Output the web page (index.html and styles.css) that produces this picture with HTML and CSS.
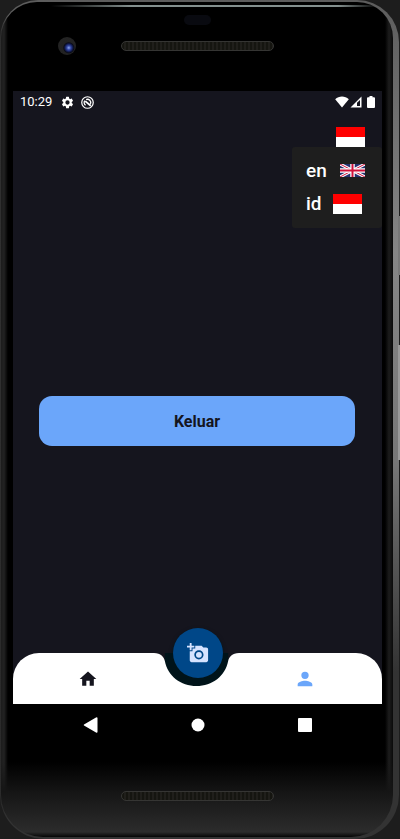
FILE: styles.css
```css
* { box-sizing: border-box; }
body {
  margin: 0;
  background: #1d1d1d;
  font-family: Roboto, "Liberation Sans", sans-serif;
  color: #fff;
}
button {
  border: 0;
  padding: 0;
  background: none;
  font: inherit;
  color: inherit;
}
svg { display: block; flex: none; }
.defs { position: absolute; }

.phone {
  position: relative;
  display: flex;
  min-height: 100vh;
  margin-right: 1px;
  padding: 2px 6px 2px 1px;
  border-radius: 38px 42px 44px 44px;
  background:
    linear-gradient(90deg, #2a2a2a, transparent 8px),
    linear-gradient(#5c5c5c, #858585 30%, #777 55%, #333 80%, #333);
}
.key {
  position: absolute;
  right: -1px;
  width: 2px;
  background: #777;
}
.power { top: 216px; height: 59px; }
.volume { top: 345px; height: 115px; background: #999; }
.glass {
  flex: 1;
  display: flex;
  flex-direction: column;
  padding: 0 11px 0 12px;
  border-radius: 36px 36px 42px 42px;
  background:
    linear-gradient(90deg, transparent 50px, #84908f 130px, #84908f 86%, transparent 96%) 0 3px / 100% 2px no-repeat,
    linear-gradient(transparent calc(100% - 75px), #151515 calc(100% - 45px), #2c2c2c calc(100% - 5px), #050505),
    linear-gradient(90deg, #1c1c1c, #222 3px, #000 7px, #000 calc(100% - 8px), #1c1c1c calc(100% - 4px), #0a0a0a);
}
.bezel-top {
  height: 89px;
  padding-top: 13px;
}
.sensor {
  display: block;
  width: 27px;
  height: 10px;
  margin: 0 auto;
  border-radius: 5px;
  background: #090a10;
}
.earpiece-row {
  display: grid;
  grid-template-columns: 1fr auto 1fr;
  align-items: center;
  padding-top: 12px;
}
.camera {
  justify-self: center;
  width: 18px;
  height: 18px;
  border-radius: 50%;
  background: radial-gradient(circle at 60% 60%, #91a9f0, #3449a8 2px, #111a4c 4px, #0b0c19 5px, #222 6px, #242424);
}
.speaker {
  width: 153px;
  height: 10px;
  border: 1px solid #353533;
  border-radius: 5px;
  background: repeating-linear-gradient(90deg, #151510, #151510 2px, #201f1b 2px, #201f1b 4px);
}

.screen {
  flex: none;
  min-height: 613px;
  display: flex;
  flex-direction: column;
  background: #15151e;
}
.status {
  display: flex;
  align-items: center;
  height: 22px;
  padding: 0 7px;
  font-size: 13px;
  line-height: 22px;
}
.status-icon {
  width: 13px;
  height: 13px;
  margin-left: 7px;
}
.time { margin-right: 2px; }
.signals {
  display: flex;
  gap: 1px;
  margin-left: auto;
}
.battery { margin-left: 4px; }
.appbar {
  position: relative;
  display: flex;
  justify-content: flex-end;
  padding: 14px 17px 0;
}
.menu {
  position: absolute;
  top: 34px;
  right: 0;
  width: 90px;
  padding: 7px 14px 8px;
  border-radius: 3px;
  background: #1e1e1e;
}
.menu button {
  display: flex;
  align-items: center;
  gap: 11px;
  height: 33px;
  font-size: 19px;
  font-weight: 500;
}
.uk { margin-left: 2px; }
.content {
  flex: 1;
  display: flex;
  align-items: center;
  padding: 42px 27px 0 26px;
}
.logout {
  flex: 1;
  height: 50px;
  border-radius: 13px;
  background: #6ba6fa;
  color: #15151e;
  font-size: 16px;
  font-weight: 700;
}
.tabs {
  position: relative;
  display: flex;
  height: 51px;
}
.tab {
  flex: 1;
  display: flex;
  align-items: center;
  justify-content: center;
  background: #fff;
}
.tab-home {
  padding-left: 12px;
  border-top-left-radius: 26px;
}
.tab-user {
  padding-right: 14px;
  border-top-right-radius: 26px;
}
.notch { margin: 0 -1px; }
.fab {
  position: absolute;
  top: -25px;
  left: calc(50% - 25px);
  display: grid;
  place-items: center;
  width: 50px;
  height: 50px;
  border-radius: 50%;
  background: #004788;
  box-shadow: 0 2px 4px #00141a;
}
.system {
  display: flex;
  justify-content: space-around;
  align-items: center;
  height: 42px;
  padding: 0 24px;
}
.bezel-bottom {
  flex: 1;
  display: flex;
  justify-content: center;
  padding-top: 45px;
}
```

FILE: index.html
```html
<!DOCTYPE html>
<html lang="id">
<head>
<meta charset="utf-8">
<meta name="viewport" content="width=device-width, initial-scale=1">
<title>Profil</title>
<link rel="stylesheet" href="styles.css">
</head>
<body>
<svg class="defs" width="0" height="0" aria-hidden="true">
  <symbol id="flag-id" viewBox="0 0 29 20" preserveAspectRatio="none">
    <path fill="#fff" d="M0 0h29v20H0z"/><path fill="#f00" d="M0 0h29v10H0z"/>
  </symbol>
  <symbol id="flag-en" viewBox="0 0 50 26" preserveAspectRatio="none">
    <path fill="#25306f" d="M0 0h50v26H0z"/>
    <path stroke="#fff" stroke-width="6" d="M0 0l50 26M50 0L0 26"/>
    <path stroke="#d0103a" stroke-width="2" d="M0 0l50 26M50 0L0 26"/>
    <path stroke="#fff" stroke-width="9" d="M25 0v26M0 13h50"/>
    <path stroke="#d0103a" stroke-width="4" d="M25 0v26M0 13h50"/>
  </symbol>
</svg>
<div class="phone">
  <span class="key power"></span>
  <span class="key volume"></span>
  <div class="glass">
    <div class="bezel-top">
      <span class="sensor"></span>
      <div class="earpiece-row">
        <span class="camera"></span>
        <span class="speaker"></span>
      </div>
    </div>
    <div class="screen">
      <div class="status">
        <span class="time">10:29</span>
        <svg class="status-icon" viewBox="1 1 22 22"><path fill="#fff" d="M19.14 12.94c.04-.3.06-.61.06-.94s-.02-.64-.07-.94l2.03-1.58a.49.49 0 0 0 .12-.61l-1.92-3.32a.49.49 0 0 0-.59-.22l-2.39.96a7 7 0 0 0-1.62-.94l-.36-2.54a.48.48 0 0 0-.48-.41h-3.84a.48.48 0 0 0-.47.41l-.36 2.54c-.59.24-1.13.57-1.62.94l-2.39-.96a.48.48 0 0 0-.59.22L2.74 8.87a.48.48 0 0 0 .12.61l2.03 1.58a6 6 0 0 0-.02 1.88l-2.03 1.58a.49.49 0 0 0-.12.61l1.92 3.32c.12.22.37.29.59.22l2.39-.96c.5.38 1.03.7 1.62.94l.36 2.54c.05.24.24.41.48.41h3.84c.24 0 .44-.17.47-.41l.36-2.54c.59-.24 1.13-.56 1.62-.94l2.39.96c.22.08.47 0 .59-.22l1.92-3.32a.48.48 0 0 0-.12-.61zM12 15.6a3.6 3.6 0 1 1 0-7.2 3.6 3.6 0 0 1 0 7.2z"/></svg>
        <svg class="status-icon" viewBox="0 0 14 14" fill="none" stroke="#fff"><circle cx="7" cy="7" r="6.2" stroke-width="1.3"/><path stroke-width="1.4" d="M5 10A3.6 3.6 0 0 1 4 5M5.5 3.8A3.6 3.6 0 0 1 10.2 8.5"/><path stroke-width="2" d="M4.5 5.5l6 5"/></svg>
        <span class="signals">
          <svg width="14" height="12" viewBox="0 0 14 12"><path fill="#fff" d="M7 11.5L.2 3.2C4-.3 10-.3 13.8 3.2z"/></svg>
          <svg width="12" height="12" viewBox="0 0 12 12"><path fill="#fff" d="M11.5.5v11H.5z"/><path fill="#15151e" d="M7 6.8L10 4v6H7z"/></svg>
          <svg class="battery" width="8" height="12" viewBox="0 0 8 12"><path fill="#fff" d="M2.5 0h3v1.2H7q1 0 1 1V11q0 1-1 1H1q-1 0-1-1V2.2q0-1 1-1h1.5z"/></svg>
        </span>
      </div>
      <header class="appbar">
        <button class="lang" type="button" aria-label="Bahasa"><svg width="29" height="20"><use href="#flag-id"/></svg></button>
        <div class="menu">
          <button type="button">en <svg class="uk" width="25" height="13"><use href="#flag-en"/></svg></button>
          <button type="button">id <svg width="29" height="20"><use href="#flag-id"/></svg></button>
        </div>
      </header>
      <main class="content"><button class="logout" type="button">Keluar</button></main>
      <nav class="tabs">
        <a class="tab tab-home" href="#home" aria-label="Beranda"><svg width="20" height="20" viewBox="0 0 24 24"><path fill="#15151e" d="M10 20v-6h4v6h5v-8h3L12 3 2 12h3v8z"/></svg></a>
        <svg class="notch" width="93" height="51" viewBox="0 0 94 51" preserveAspectRatio="none" aria-hidden="true">
          <path fill="#00141a" d="M13 0h68v34H13z"/>
          <path fill="#15151e" d="M0 0h15v10H0zM79 0h15v10H79z"/>
          <path fill="#fff" d="M0 0h4C11 0 14 4 15 8C18 23 31 33 47 33S76 23 79 8C80 4 83 0 90 0H94V51H0z"/>
        </svg>
        <a class="tab tab-user" href="#profile" aria-label="Profil"><svg width="22" height="22" viewBox="0 0 24 24"><path fill="#6ba6fa" d="M12 12a4 4 0 1 0 0-8 4 4 0 0 0 0 8zm0 2c-2.67 0-8 1.34-8 4v2h16v-2c0-2.66-5.33-4-8-4z"/></svg></a>
        <button class="fab" type="button" aria-label="Tambah foto"><svg width="22" height="22" viewBox="0 0 24 24"><path fill="#d6e3ff" d="M3 4V1h2v3h3v2H5v3H3V6H0V4zm3 6V7h3V4h7l1.83 2H21c1.1 0 2 .9 2 2v12c0 1.1-.9 2-2 2H5c-1.1 0-2-.9-2-2V10zm7 9c2.76 0 5-2.24 5-5s-2.24-5-5-5-5 2.24-5 5 2.24 5 5 5zm-3.2-5a3.2 3.2 0 1 0 6.4 0 3.2 3.2 0 0 0-6.4 0z"/></svg></button>
      </nav>
    </div>
    <div class="system">
      <button type="button" aria-label="Kembali"><svg width="16" height="16" viewBox="0 0 16 16"><path fill="#fff" d="M14.5.8v14.4Q14 16 13 15.4L1 8.6Q.4 8 1 7.4L13 .6Q14 0 14.5.8z"/></svg></button>
      <button type="button" aria-label="Layar utama"><svg width="16" height="16" viewBox="0 0 16 16"><circle cx="8" cy="8" r="6.5" fill="#fff"/></svg></button>
      <button type="button" aria-label="Ringkasan"><svg width="16" height="16" viewBox="0 0 16 16"><rect x="1" y="1" width="14" height="14" rx="1" fill="#fff"/></svg></button>
    </div>
    <div class="bezel-bottom"><span class="speaker"></span></div>
  </div>
</div>
</body>
</html>
```
